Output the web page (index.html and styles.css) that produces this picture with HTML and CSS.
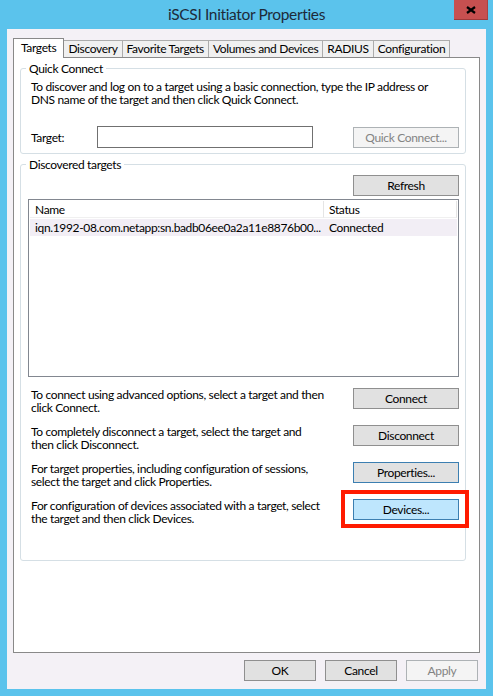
FILE: index.html
```html
<!DOCTYPE html>
<html lang="en">
<head>
    <meta charset="UTF-8">
    <title>iSCSI Initiator Properties</title>
    <link rel="stylesheet" href="styles.css">
</head>
<body>

    <header class="titlebar">
        <span></span>
        <h1 class="title">iSCSI Initiator Properties</h1>
        <button class="close" title="Close">
            <svg width="10" height="8" viewBox="0 0 10 8"><path d="M1 1 L9 7 M9 1 L1 7" stroke="#000" stroke-width="2.2" fill="none"/></svg>
        </button>
    </header>

    <div class="client">
        <div class="tabs">
            <div class="tab active">Targets</div>
            <div class="tab">Discovery</div>
            <div class="tab">Favorite Targets</div>
            <div class="tab">Volumes and Devices</div>
            <div class="tab">RADIUS</div>
            <div class="tab">Configuration</div>
        </div>

        <div class="panel">
            <fieldset class="group quick">
                <legend>Quick Connect</legend>
                <p class="note">To discover and log on to a target using a basic connection, type the IP address or<br>DNS name of the target and then click Quick Connect.</p>
                <div class="target-row">
                    <label for="targetInput">Target:</label>
                    <input id="targetInput" class="field" type="text">
                    <button class="btn" disabled>Quick Connect...</button>
                </div>
            </fieldset>

            <fieldset class="group discovered">
                <legend>Discovered targets</legend>
                <div class="refresh-row">
                    <button class="btn">Refresh</button>
                </div>

                <div class="list">
                    <div class="list-head">
                        <div class="cell">Name</div>
                        <div class="cell">Status</div>
                    </div>
                    <div class="list-row selected">
                        <div class="cell">iqn.1992-08.com.netapp:sn.badb06ee0a2a11e8876b00...</div>
                        <div class="cell">Connected</div>
                    </div>
                </div>

                <div class="action">
                    <p class="note">To connect using advanced options, select a target and then<br>click Connect.</p>
                    <button class="btn">Connect</button>
                </div>
                <div class="action">
                    <p class="note">To completely disconnect a target, select the target and<br>then click Disconnect.</p>
                    <button class="btn">Disconnect</button>
                </div>
                <div class="action">
                    <p class="note">For target properties, including configuration of sessions,<br>select the target and click Properties.</p>
                    <button class="btn default">Properties...</button>
                </div>
                <div class="action">
                    <p class="note">For configuration of devices associated with a target, select<br>the target and then click Devices.</p>
                    <button class="btn hot marked">Devices...</button>
                </div>
            </fieldset>
        </div>

        <div class="footer">
            <button class="btn">OK</button>
            <button class="btn">Cancel</button>
            <button class="btn" disabled>Apply</button>
        </div>
    </div>

</body>
</html>
```

FILE: styles.css
```css
body {
    margin: 0;
    height: 696px;
    overflow: hidden;
    background-color: #5bc3ec;
    font-family: 'Lato', 'Segoe UI', sans-serif;
    font-size: 12px;
    line-height: 13px;
    letter-spacing: -0.35px;
    color: #000;
}

/* Title bar */
.titlebar {
    display: grid;
    grid-template-columns: 1fr auto 1fr;
    height: 29px;
}

.title {
    margin: 0;
    font-size: 15.5px;
    font-weight: normal;
    line-height: 28px;
    color: #1d2a3a;
}

.close {
    justify-self: end;
    display: flex;
    align-items: center;
    justify-content: center;
    width: 34px;
    height: 20px;
    margin-right: 5px;
    padding: 0;
    background: #c75050;
    border: none;
    border-bottom: 1px solid #9e3a3a;
    border-right: 1px solid #a84343;
}

/* Dialog body */
.client {
    margin: 0 7px;
    height: 660px;
    box-sizing: border-box;
    padding: 9px 6px 8px 6px;
    background: #f4f1f6;
}

.tabs {
    display: flex;
    align-items: flex-end;
    height: 19px;
}

.tab {
    height: 17px;
    box-sizing: border-box;
    padding: 0 4px;
    line-height: 16px;
    background: #f0f0f0;
    border: 1px solid #acacac;
    border-bottom: none;
    margin-left: -1px;
    white-space: nowrap;
}

.tab.active {
    position: relative;
    z-index: 1;
    height: 20px;
    margin: 0 0 -1px 0;
    padding: 0 7px;
    line-height: 17px;
    background: #fff;
    border-color: #898989;
}

.panel {
    height: 596px;
    box-sizing: border-box;
    padding: 3px 13px 0 6px;
    background: #fff;
    border: 1px solid #898989;
}

/* Group boxes */
.group {
    margin: 0;
    min-width: 0;
    padding: 0 6px 5px 10px;
    border: 1px solid #d5dfe5;
    border-radius: 3px;
}

.group legend {
    margin-left: -5px;
    padding: 0 3px;
    line-height: 15px;
}

.discovered {
    margin-top: 3px;
    padding-bottom: 35px;
}

.note {
    margin: 0;
    white-space: nowrap;
}

.quick .note {
    margin-top: 4px;
}

.target-row {
    display: flex;
    align-items: center;
    height: 22px;
    margin-top: 20px;
}

.target-row label {
    width: 66px;
}

.field {
    width: 216px;
    height: 22px;
    box-sizing: border-box;
    margin: 0;
    border: 1px solid #707070;
    background: #fff;
}

.target-row .btn {
    margin-left: auto;
}

/* Buttons */
.btn {
    width: 106px;
    height: 21px;
    padding: 0;
    font-family: inherit;
    font-size: 12px;
    letter-spacing: inherit;
    color: #000;
    background: #e1e1e1;
    border: 1px solid #8f8f8f;
}

.btn.default {
    border-color: #3c7fb1;
}

.btn.hot {
    background: #bee6fd;
    border-color: #3c7fb1;
}

.btn:disabled {
    color: #838383;
    background: #f4f4f4;
    border-color: #adb2b5;
}

/* red annotation frame round the Devices button */
.marked {
    position: relative;
}

.marked::after {
    content: '';
    position: absolute;
    top: -10px;
    bottom: -9px;
    left: -13px;
    right: -11px;
    border: 4px solid #ff1a00;
}

.refresh-row {
    display: flex;
    justify-content: flex-end;
    margin-top: 3px;
}

/* Target list */
.list {
    height: 178px;
    box-sizing: border-box;
    margin: 3px 0 0 -3px;
    background: #fff;
    border: 1px solid #828790;
    padding: 1px;
}

.list-head,
.list-row {
    display: grid;
    grid-template-columns: 294px 1fr;
    height: 17px;
}

.list-head .cell {
    border-right: 1px solid #e5e5e5;
    border-bottom: 1px solid #f0f0f0;
}

.list-row {
    margin-top: 1px;
    background: #f2eef5;
}

.cell {
    min-width: 0;
    padding: 0 5px;
    line-height: 17px;
    white-space: nowrap;
    overflow: hidden;
}

.action {
    display: flex;
    justify-content: space-between;
    align-items: flex-start;
    height: 26px;
    margin-top: 11px;
}

/* Footer buttons */
.footer {
    display: flex;
    justify-content: flex-end;
    gap: 9px;
    margin-top: 7px;
    padding-right: 2px;
}

.footer .btn {
    width: 72px;
}
```
